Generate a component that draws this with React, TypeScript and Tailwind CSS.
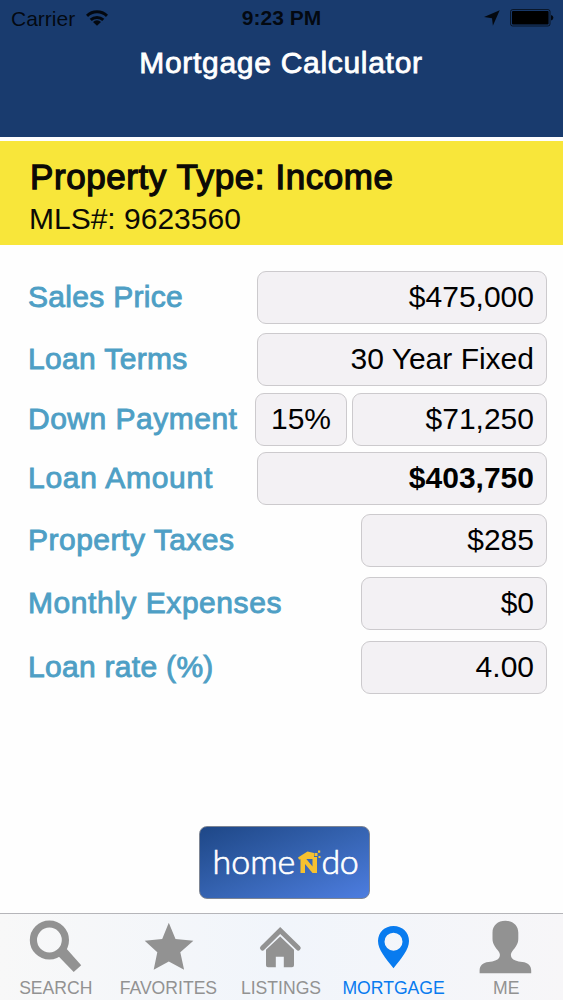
import type { ReactNode } from 'react'
import clsx from 'clsx'

type Field = {
  value: string
  width: string
  bold?: boolean
  center?: boolean
}

type Row = {
  label: string
  spacing: string
  tracking: string
  fields: Field[]
}

const rows: Row[] = [
  { label: 'Sales Price', spacing: 'mt-[26px]', tracking: 'tracking-[0.3px]', fields: [{ value: '$475,000', width: 'w-[290px]' }] },
  { label: 'Loan Terms', spacing: 'mt-[9px]', tracking: 'tracking-[0.35px]', fields: [{ value: '30 Year Fixed', width: 'w-[290px]' }] },
  {
    label: 'Down Payment',
    spacing: 'mt-[7px]',
    tracking: 'tracking-[0.5px]',
    fields: [
      { value: '15%', width: 'w-[92px]', center: true },
      { value: '$71,250', width: 'w-[195px]' },
    ],
  },
  { label: 'Loan Amount', spacing: 'mt-[6px]', tracking: 'tracking-[0.75px]', fields: [{ value: '$403,750', width: 'w-[290px]', bold: true }] },
  { label: 'Property Taxes', spacing: 'mt-[9px]', tracking: 'tracking-[0.5px]', fields: [{ value: '$285', width: 'w-[186px]' }] },
  { label: 'Monthly Expenses', spacing: 'mt-[10px]', tracking: 'tracking-[0.55px]', fields: [{ value: '$0', width: 'w-[186px]' }] },
  { label: 'Loan rate (%)', spacing: 'mt-[11px]', tracking: 'tracking-[0.3px]', fields: [{ value: '4.00', width: 'w-[186px]' }] },
]

const tabs: { label: string; active?: boolean; icon: ReactNode }[] = [
  {
    label: 'SEARCH',
    icon: (
      <>
        <circle cx="23.4" cy="22" r="16" fill="none" stroke="currentColor" strokeWidth="7.2" />
        <path d="M33.200 38.900 30 36l8-8 3.200 3.500 14 15.700-7.500 6.800z" />
      </>
    ),
  },
  {
    label: 'FAVORITES',
    icon: <path d="M29.800 4.700 36.500 21 54.400 22.700 41.300 34.300 45.100 51.700 29.800 43.500 14.700 51.700 18.300 34.300 5.700 22.700 23.200 21z" />,
  },
  {
    label: 'LISTINGS',
    icon: (
      <>
        <path d="M11.500 30 29.200 12.400 47.200 30" fill="none" stroke="currentColor" strokeWidth="5" strokeLinecap="round" />
        <path d="M29.200 18.500 43 31.800v15.500q0 2-2 2h-8.200V38.700h-8v10.600h-7.800q-2 0-2-2V31.800z" />
      </>
    ),
  },
  {
    label: 'MORTGAGE',
    active: true,
    icon: (
      <path
        fillRule="evenodd"
        d="M29.500 8C20.500 8 14 14.500 14 23c0 8.500 7.500 17 15.500 27.300C37.500 40 45 31.500 45 23 45 14.500 38.500 8 29.500 8zm0 6.700a9 9 0 1 1 0 18 9 9 0 0 1 0-18z"
      />
    ),
  },
  {
    label: 'ME',
    icon: (
      <path d="M28.400 2.700c-7.500 0-12.900 4.500-12.900 12v6c0 5.500 3 8.500 6 12.500 1.800 2.300 1.800 5 .5 6.800-1.500 2-5 3.500-10.500 4C5.500 44.600 2.600 48 2.600 52.500v2.800h51.600v-2.800c0-4.500-2.900-7.900-8.900-8.500-5.500-.5-9-2-10.500-4-1.300-1.800-1.300-4.500.5-6.800 3-4 6-7 6-12.500v-6c0-7.500-5.400-12-12.900-12z" />
    ),
  },
]

function StatusBar() {
  return (
    <div className="grid h-9 grid-cols-3 items-center pl-[11px] pr-[9px] text-[21px] leading-none text-black/85">
      <div className="flex items-center gap-[11px]">
        <span>Carrier</span>
        <svg width="22" height="16" viewBox="0 0 22 16" fill="none" stroke="currentColor" strokeWidth="3">
          <path d="M1 5.800a14.500 14.500 0 0 1 20 0" />
          <path d="M4.700 9.900a9.200 9.200 0 0 1 12.600 0" />
          <path d="M11 15.700 7 11.900a5.600 5.600 0 0 1 8 0z" fill="currentColor" stroke="none" />
        </svg>
      </div>
      <span className="pr-[2px] pb-px text-center font-bold">9:23 PM</span>
      <div className="flex items-center justify-end gap-[10px]">
        <svg width="16" height="16" viewBox="0 0 16 16" fill="currentColor">
          <path d="M15.700.3 8.900 15.800 8 8.200 0 7z" />
        </svg>
        <svg width="44" height="18" viewBox="0 0 44 18">
          <rect x=".6" y=".6" width="39.4" height="16.4" rx="2" fill="none" stroke="currentColor" strokeWidth=".8" />
          <rect x="2" y="2" width="36.6" height="13.600" rx="1" fill="#000" />
          <path d="M41 6q2.400 .5 2.400 2.800T41 11.600z" fill="currentColor" />
        </svg>
      </div>
    </div>
  )
}

function ValueBox({ value, width, bold, center }: Field) {
  return (
    <div
      className={clsx(
        'flex h-[53px] items-center rounded-[9px] border border-[#cccacd] bg-[#f3f1f4] pb-[2px] text-[30px] leading-none text-black',
        width,
        center ? 'justify-center' : 'justify-end pr-3',
        bold && 'font-bold',
      )}
    >
      {value}
    </div>
  )
}

function Logo() {
  return (
    <button
      type="button"
      className="flex h-[73px] w-[171px] items-center rounded-lg border border-[#7d8594] bg-linear-to-br from-[#1e4787] via-[#3563b1] to-[#4d7de0] pb-[3px] pl-[13px] font-['Lato'] text-[34px] leading-none font-light text-white [-webkit-text-stroke:0.7px]"
    >
      <span className="w-[85px] text-left">home</span>
      {/* Yellow house shaped like an N, with pixels coming off the roof */}
      <svg className="mt-px shrink-0" width="23" height="24" viewBox="0 0 23 24" fill="#f6c12f">
        <path d="M0 7.500 9.500 1.500 16 3v4h3v2H6L1 9.500z" />
        <path d="M2.500 8h5l7 8.500V9H19v14h-4.500L7 14v9H2.500z" />
        <path d="M16.500 3h3v3h-3zM20 .5h2.200v2.200H20zM20.500 6h2v2h-2z" />
      </svg>
      <span className="ml-px tracking-[-0.5px]">do</span>
    </button>
  )
}

function TabBar() {
  return (
    <nav className="grid h-[87px] grid-cols-5 border-t border-[#b5b5b9] bg-linear-to-r from-[#f8f8f8] via-[#f1f5fb] to-[#f7f6f8]">
      {tabs.map((tab) => (
        <div key={tab.label} className={clsx('flex flex-col items-center', tab.active ? 'text-[#087bef]' : 'text-[#929292]')}>
          <svg className="mt-1 shrink-0" width="60" height="60" viewBox="0 0 60 60" fill="currentColor">
            {tab.icon}
          </svg>
          <span className="pr-px text-[17.6px] leading-5">{tab.label}</span>
        </div>
      ))}
    </nav>
  )
}

export default function App() {
  return (
    <div className="flex h-[1000px] w-[563px] flex-col overflow-hidden bg-[#fefefe] font-['Liberation_Sans',Arial,sans-serif]">
      <header className="h-[137px] bg-[#193b6e]">
        <StatusBar />
        <h1 className="mt-[9px] pr-px text-center text-[30px] leading-9 tracking-[0.7px] text-white [-webkit-text-stroke:0.8px]">
          Mortgage Calculator
        </h1>
      </header>

      <section className="mt-1 h-[104px] bg-[#f8e63a] pl-[29px] pt-[15px] text-[#0c0a05]">
        <h2 className="pl-px text-[35px] leading-[42px] tracking-[0.58px] [-webkit-text-stroke:1.3px]">Property Type: Income</h2>
        <p className="text-[30px] leading-[42px]">MLS#: 9623560</p>
      </section>

      <main className="pl-[28px] pr-4">
        {rows.map((row) => (
          <div key={row.label} className={clsx('flex items-center justify-between', row.spacing)}>
            <span
              className={clsx(
                'pb-[2px] text-[30px] leading-none whitespace-nowrap text-[#4e9fc5] [-webkit-text-stroke:0.9px]',
                row.tracking,
              )}
            >
              {row.label}
            </span>
            <div className="flex gap-[5px]">
              {row.fields.map((field) => (
                <ValueBox key={field.value} {...field} />
              ))}
            </div>
          </div>
        ))}
      </main>

      <div className="mt-auto mb-[14px] flex justify-center pl-[5px]">
        <Logo />
      </div>
      <TabBar />
    </div>
  )
}
